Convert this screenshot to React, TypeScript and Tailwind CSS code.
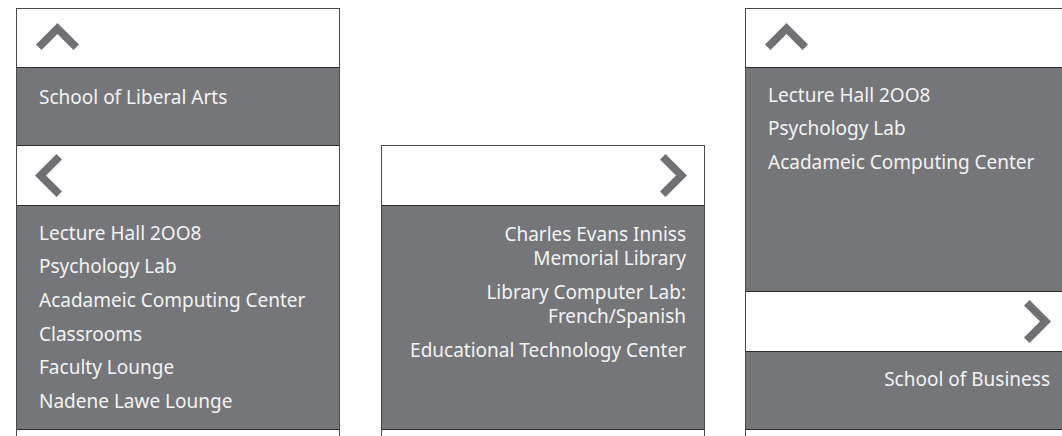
import React from "react";

const font = { fontFamily: '"Noto Sans", "Open Sans", sans-serif' };

const ChevronUp = () => (
  <svg width="43" height="28" viewBox="0 0 43 28">
    <polygon points="0,21.5 21.5,0 43,21.5 37.5,27 21.5,11 5.5,27" fill="#6f7074" />
  </svg>
);

const ChevronLeft = () => (
  <svg width="27" height="43" viewBox="0 0 27 43">
    <polygon points="21.5,0 0,21.5 21.5,43 27,37.5 11,21.5 27,5.5" fill="#6f7074" />
  </svg>
);

const ChevronRight = () => (
  <svg width="27" height="43" viewBox="0 0 27 43">
    <polygon points="5.5,0 27,21.5 5.5,43 0,37.5 16,21.5 0,5.5" fill="#6f7074" />
  </svg>
);

const UpBar = () => (
  <div className="h-[59px] border-b border-[#2e2e2e] bg-white pl-[19px] pt-[14px]">
    <ChevronUp />
  </div>
);

const LeftBar = () => (
  <div className="flex h-[60px] items-center border-b border-[#2e2e2e] bg-white pl-[18px]">
    <ChevronLeft />
  </div>
);

const RightBar = () => (
  <div className="flex h-[60px] items-center justify-end border-b border-[#2e2e2e] bg-white pr-[17px]">
    <ChevronRight />
  </div>
);

const Block = ({
  items,
  right,
  h,
  pt = "pt-[10px]",
  itemPad = "py-[4.8px]",
}: {
  items: React.ReactNode[];
  right?: boolean;
  h: string;
  pt?: string;
  itemPad?: string;
}) => (
  <div
    className={`${h} ${pt} border-b border-[#2e2e2e] bg-[#75767a] text-[19px] leading-6 text-[#f3f3f3] ${
      right ? "pr-[18px] text-right" : "pl-[22px]"
    }`}
  >
    {items.map((item, i) => (
      <div key={i} className={itemPad}>
        {item}
      </div>
    ))}
  </div>
);

export default function App() {
  return (
    <div className="flex h-[436px] items-start gap-10 overflow-hidden bg-white pl-4" style={font}>
      <div className="mt-2 w-[324px] shrink-0 border-x border-t border-[#4a4a4a]">
        <UpBar />
        <Block h="h-[78px]" pt="pt-[12px]" items={["School of Liberal Arts"]} />
        <LeftBar />
        <Block
          h="h-[224px]"
          items={[
            "Lecture Hall 2OO8",
            "Psychology Lab",
            "Acadameic Computing Center",
            "Classrooms",
            "Faculty Lounge",
            "Nadene Lawe Lounge",
          ]}
        />
        <div className="h-20 bg-white" />
      </div>

      <div className="ml-px mt-[145px] w-[324px] shrink-0 border-x border-t border-[#4a4a4a]">
        <RightBar />
        <Block
          h="h-[224px]"
          right
          pt="pt-[11px]"
          itemPad="py-[5px]"
          items={[
            <>
              Charles Evans Inniss
              <br />
              Memorial Library
            </>,
            <>
              Library Computer Lab:
              <br />
              French/Spanish
            </>,
            "Educational Technology Center",
          ]}
        />
        <div className="h-20 bg-white" />
      </div>

      <div className="mt-2 w-[324px] shrink-0 border-x border-t border-[#4a4a4a]">
        <UpBar />
        <Block
          h="h-[224px]"
          items={["Lecture Hall 2OO8", "Psychology Lab", "Acadameic Computing Center"]}
        />
        <RightBar />
        <Block h="h-[78px]" right items={["School of Business"]} />
        <div className="h-20 bg-white" />
      </div>
    </div>
  );
}
